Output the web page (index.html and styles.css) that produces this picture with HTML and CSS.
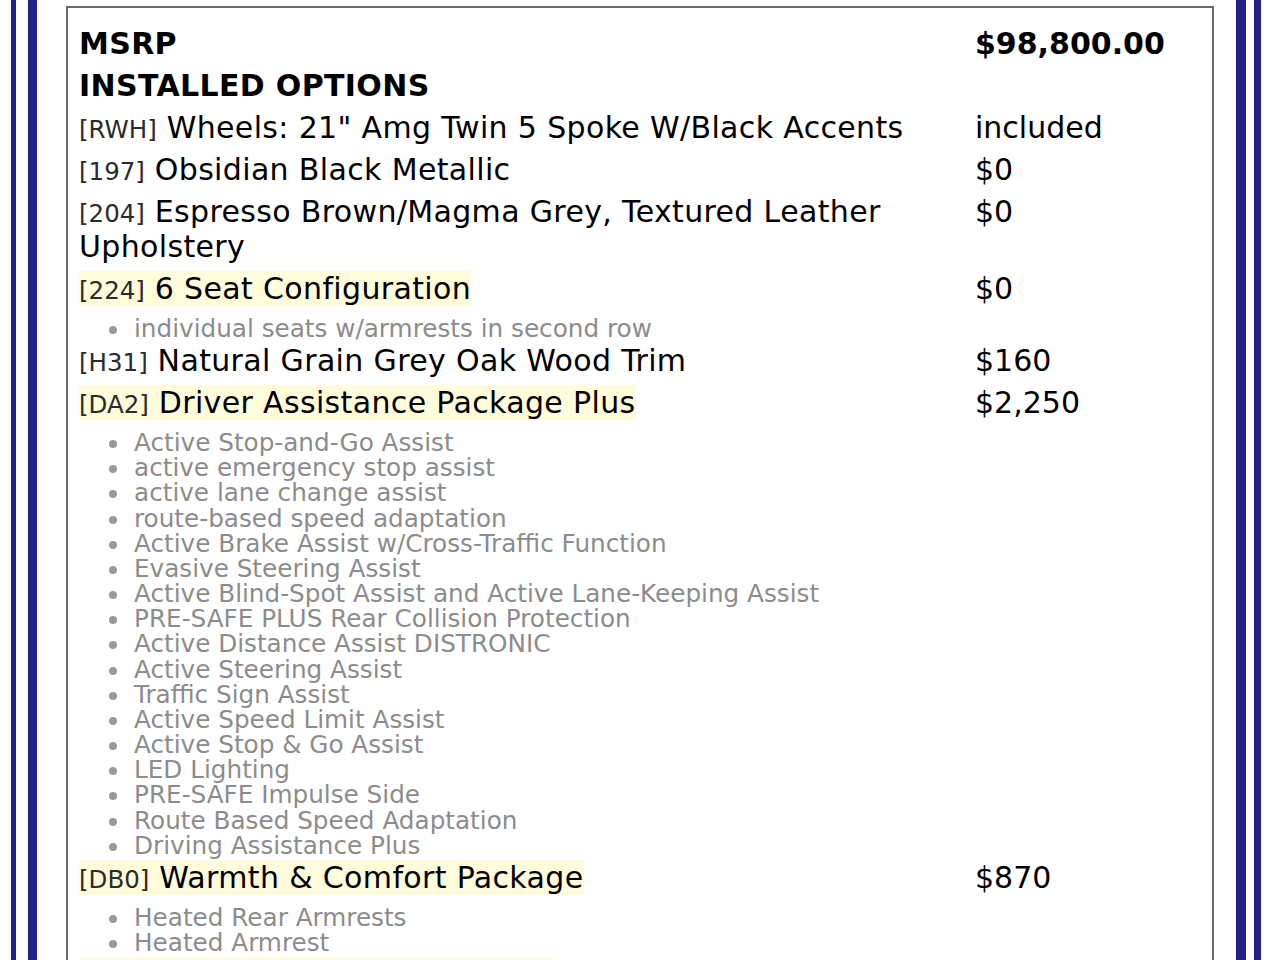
FILE: index.html
```html
<!DOCTYPE html>
<html>
<head>
<meta charset="utf-8">
<link rel="stylesheet" href="styles.css">
</head>
<body>
<div class="outer">
  <div class="inner">
    <div class="box">
      <div class="opt">
        <div class="desc"><b>MSRP</b></div>
        <div class="price"><b>$98,800.00</b></div>
      </div>
      <div class="opt">
        <div class="desc"><b>INSTALLED OPTIONS</b></div>
        <div class="price"></div>
      </div>
      <div class="opt">
        <div class="desc"><span class="code">[RWH]</span> Wheels: 21" Amg Twin 5 Spoke W/Black Accents</div>
        <div class="price">included</div>
      </div>
      <div class="opt">
        <div class="desc"><span class="code">[197]</span> Obsidian Black Metallic</div>
        <div class="price">$0</div>
      </div>
      <div class="opt">
        <div class="desc"><span class="code">[204]</span> Espresso Brown/Magma Grey, Textured Leather Upholstery</div>
        <div class="price">$0</div>
      </div>
      <div class="opt">
        <div class="desc">
          <span class="hl"><span class="code">[224]</span> 6 Seat Configuration</span>
          <ul class="feat">
            <li>individual seats w/armrests in second row</li>
          </ul>
        </div>
        <div class="price">$0</div>
      </div>
      <div class="opt">
        <div class="desc"><span class="code">[H31]</span> Natural Grain Grey Oak Wood Trim</div>
        <div class="price">$160</div>
      </div>
      <div class="opt">
        <div class="desc">
          <span class="hl"><span class="code">[DA2]</span> Driver Assistance Package Plus</span>
          <ul class="feat">
            <li>Active Stop-and-Go Assist</li>
            <li>active emergency stop assist</li>
            <li>active lane change assist</li>
            <li>route-based speed adaptation</li>
            <li>Active Brake Assist w/Cross-Traffic Function</li>
            <li>Evasive Steering Assist</li>
            <li>Active Blind-Spot Assist and Active Lane-Keeping Assist</li>
            <li>PRE-SAFE PLUS Rear Collision Protection</li>
            <li>Active Distance Assist DISTRONIC</li>
            <li>Active Steering Assist</li>
            <li>Traffic Sign Assist</li>
            <li>Active Speed Limit Assist</li>
            <li>Active Stop &amp; Go Assist</li>
            <li>LED Lighting</li>
            <li>PRE-SAFE Impulse Side</li>
            <li>Route Based Speed Adaptation</li>
            <li>Driving Assistance Plus</li>
          </ul>
        </div>
        <div class="price">$2,250</div>
      </div>
      <div class="opt">
        <div class="desc">
          <span class="hl"><span class="code">[DB0]</span> Warmth &amp; Comfort Package</span>
          <ul class="feat">
            <li>Heated Rear Armrests</li>
            <li>Heated Armrest</li>
          </ul>
        </div>
        <div class="price">$870</div>
      </div>
      <div class="opt">
        <div class="desc">
          <span class="hl"><span class="code">[P49]</span> Acoustic Comfort Package</span>
        </div>
        <div class="price">$1,100</div>
      </div>
    </div>
  </div>
</div>
</body>
</html>
```

FILE: styles.css
```css
html, body {
  margin: 0;
  padding: 0;
  background: #ffffff;
  height: 100%;
  overflow: hidden;
}

body {
  font-family: "DejaVu Sans", "Noto Sans", sans-serif;
  color: #000000;
}

.outer {
  margin: 0 10px 0 11px;
  border-left: 5px solid #22228a;
  border-right: 7px solid #22228a;
  padding: 0 8px 0 12px;
  min-height: 100%;
  box-sizing: border-box;
}

.inner {
  border-left: 9px solid #22228a;
  border-right: 10px solid #22228a;
  padding: 6px 22px 0 29px;
  min-height: 960px;
  box-sizing: border-box;
}

.box {
  border: 2px solid #6b6b6b;
  border-bottom: none;
  padding: 18px 11px 40px 11px;
  min-height: 1000px;
}

.opt {
  display: grid;
  grid-template-columns: 880px 1fr;
  column-gap: 16px;
  font-size: 30px;
  line-height: 35px;
}

.opt + .opt {
  margin-top: 7px;
}

.desc {
  letter-spacing: 0.35px;
}

.price {
  letter-spacing: 0;
}

.opt b {
  font-weight: bold;
}

.code {
  font-size: 24.5px;
  line-height: 1;
  letter-spacing: 0;
  color: #2b2b2b;
}

.hl {
  background: #fffcdc;
}

.feat {
  margin: 10px 0 -5px 0;
  padding-left: 55px;
  font-size: 24.7px;
  line-height: 25.15px;
  letter-spacing: 0;
  color: #8c8c8c;
  list-style: none;
}

.feat li::before {
  content: "";
  display: inline-block;
  width: 8px;
  height: 8px;
  border-radius: 50%;
  background: #9a9a9a;
  margin-left: -25px;
  margin-right: 17px;
  vertical-align: 3px;
}
```
